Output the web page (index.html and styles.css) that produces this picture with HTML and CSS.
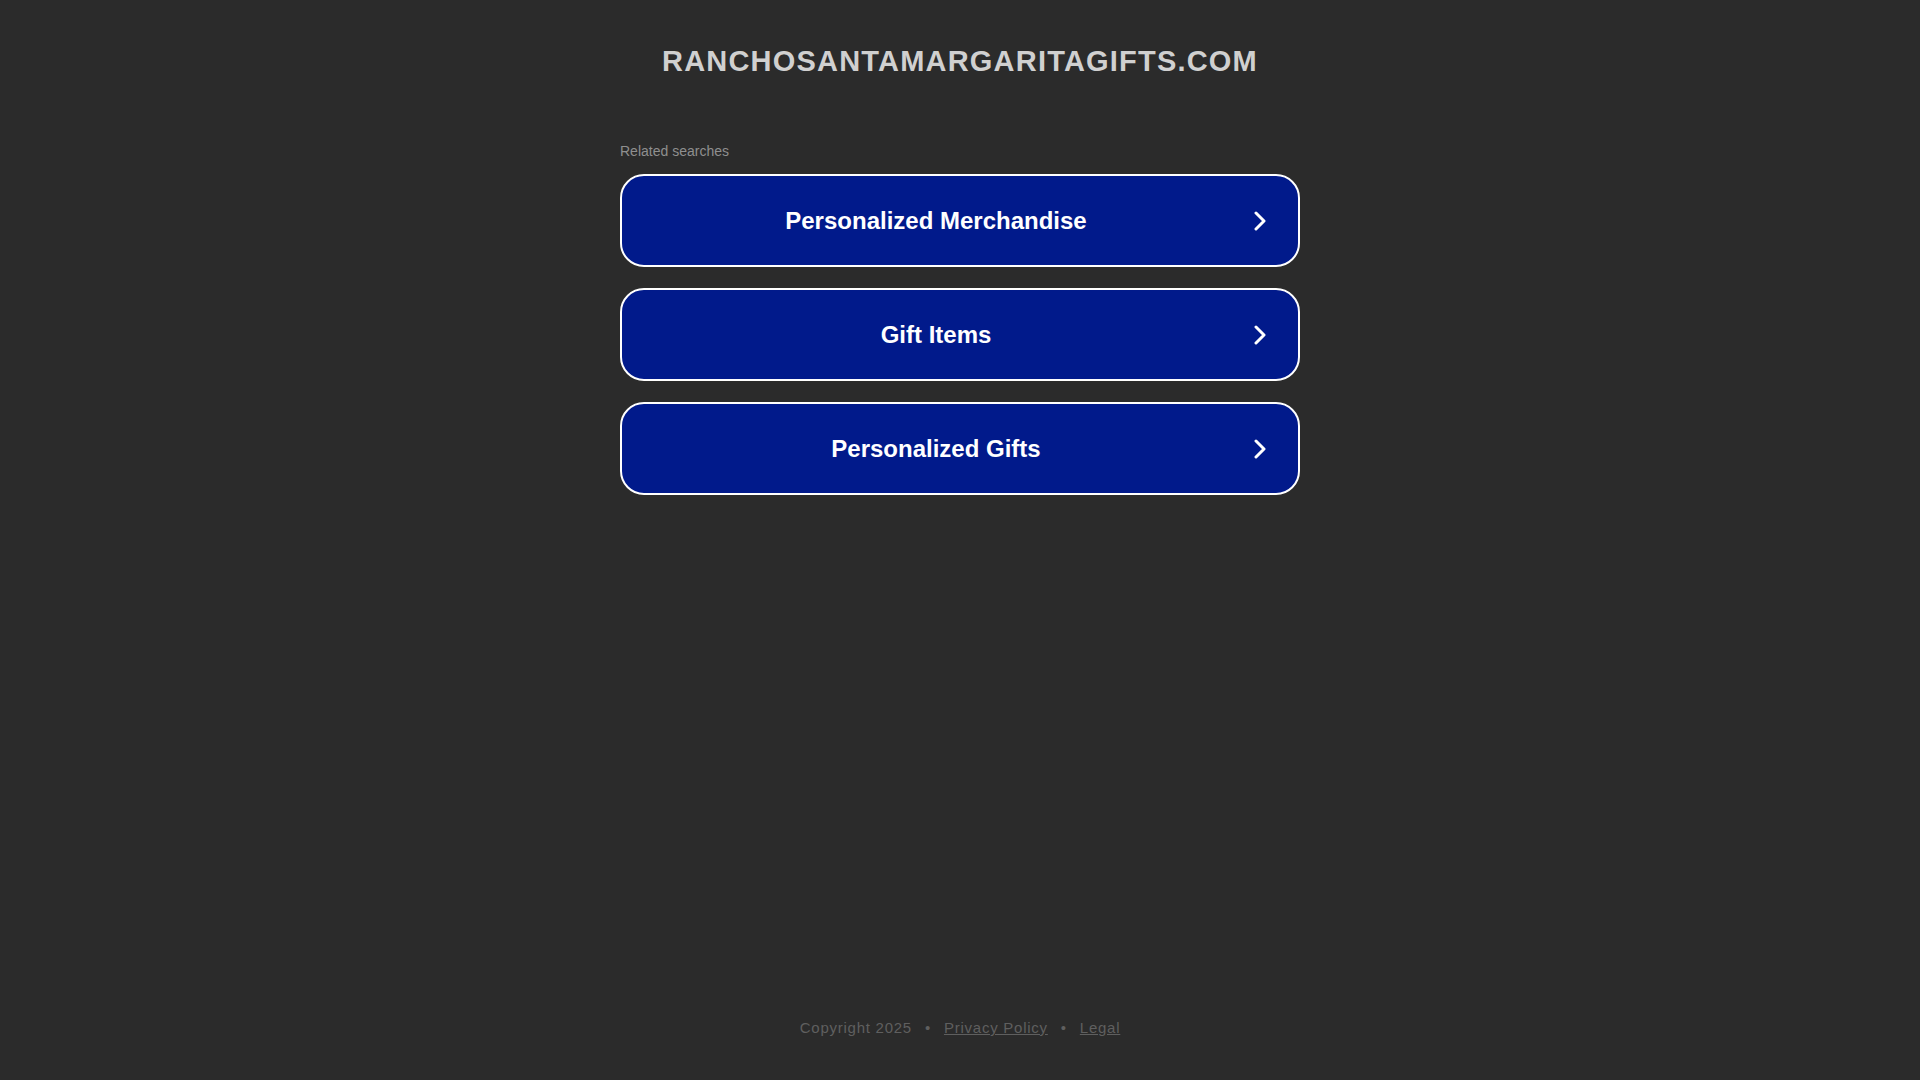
FILE: index.html
```html
<!DOCTYPE html>
<html>
<head>
<meta charset="utf-8">
<title>ranchosantamargaritagifts.com</title>
<link rel="stylesheet" href="styles.css">
</head>
<body>
<div class="page">
  <header class="header">
    <h1 class="domain">RANCHOSANTAMARGARITAGIFTS.COM</h1>
  </header>
  <main class="main">
    <div class="related">
      <p class="related-title">Related searches</p>
      <a class="search-btn" href="#"><span class="label">Personalized Merchandise</span><svg class="chev" viewBox="0 0 12 20" width="12" height="20"><path d="M2 2 L10 10 L2 18" fill="none" stroke="#fff" stroke-width="3" stroke-linecap="round" stroke-linejoin="round"/></svg></a>
      <a class="search-btn" href="#"><span class="label">Gift Items</span><svg class="chev" viewBox="0 0 12 20" width="12" height="20"><path d="M2 2 L10 10 L2 18" fill="none" stroke="#fff" stroke-width="3" stroke-linecap="round" stroke-linejoin="round"/></svg></a>
      <a class="search-btn" href="#"><span class="label">Personalized Gifts</span><svg class="chev" viewBox="0 0 12 20" width="12" height="20"><path d="M2 2 L10 10 L2 18" fill="none" stroke="#fff" stroke-width="3" stroke-linecap="round" stroke-linejoin="round"/></svg></a>
    </div>
  </main>
  <footer class="footer">
    <span>Copyright 2025</span><span class="dot">•</span><a href="#">Privacy Policy</a><span class="dot">•</span><a href="#">Legal</a>
  </footer>
</div>
</body>
</html>
```

FILE: styles.css
```css
html, body {
  margin: 0;
  padding: 0;
  background: #2b2b2b;
  font-family: "Liberation Sans", Arial, sans-serif;
}
.page {
  height: 1080px;
  display: flex;
  flex-direction: column;
}
.header {
  padding-top: 44px;
  text-align: center;
}
.domain {
  margin: 0;
  font-size: 29px;
  line-height: 34px;
  font-weight: 700;
  color: #d0d0d0;
  letter-spacing: 1.2px;
}
.main {
  flex: 1;
  display: flex;
  justify-content: center;
  padding-top: 65px;
}
.related {
  width: 680px;
  display: flex;
  flex-direction: column;
}
.related-title {
  margin: 0 0 14px 0;
  font-size: 14px;
  line-height: 17px;
  color: #8f8f8f;
}
.search-btn {
  box-sizing: border-box;
  height: 93px;
  margin-bottom: 21px;
  border: 2px solid #ffffff;
  border-radius: 24px;
  background: #011a8b;
  color: #ffffff;
  text-decoration: none;
  display: flex;
  align-items: center;
  padding: 0 32px 0 0;
}
.label {
  flex: 1;
  margin-right: 4px;
  text-align: center;
  font-size: 24px;
  font-weight: 700;
}
.chev {
  display: block;
}
.footer {
  text-align: center;
  padding-bottom: 42px;
  font-size: 15px;
  line-height: 20px;
  color: #5f5f5f;
  letter-spacing: 0.75px;
}
.footer a {
  color: #5f5f5f;
  text-decoration: underline;
}
.dot {
  margin: 0 13px;
}
```
